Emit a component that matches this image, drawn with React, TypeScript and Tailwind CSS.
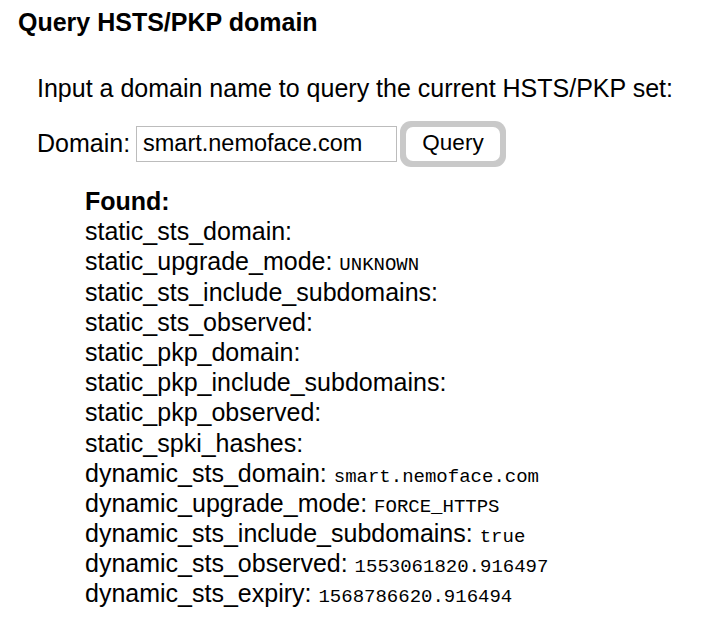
export default function App() {
  const rows: [string, string?][] = [
    ['static_sts_domain:'],
    ['static_upgrade_mode:', 'UNKNOWN'],
    ['static_sts_include_subdomains:'],
    ['static_sts_observed:'],
    ['static_pkp_domain:'],
    ['static_pkp_include_subdomains:'],
    ['static_pkp_observed:'],
    ['static_spki_hashes:'],
    ['dynamic_sts_domain:', 'smart.nemoface.com'],
    ['dynamic_upgrade_mode:', 'FORCE_HTTPS'],
    ['dynamic_sts_include_subdomains:', 'true'],
    ['dynamic_sts_observed:', '1553061820.916497'],
    ['dynamic_sts_expiry:', '1568786620.916494'],
  ];

  return (
    <div className="w-[702px] h-[634px] bg-white text-black font-['Liberation_Sans',Arial,sans-serif] text-[25px]">
      <h2 className="pt-[7px] pl-[18px] font-bold leading-[30px]">Query HSTS/PKP domain</h2>

      <div className="pl-[37px]">
        <p className="mt-[36px] leading-[30px]">
          Input a domain name to query the current HSTS/PKP set:
        </p>

        <div className="mt-[17px] flex items-center h-[47px]">
          <label className="w-[99px]">Domain:</label>
          <input
            defaultValue="smart.nemoface.com"
            className="w-[261px] h-[36px] border border-[#bcbcbc] px-[6px] text-[23.5px] outline-none"
          />
          <div className="ml-[3px] rounded-[11px] bg-[#c9c9c9] p-[6px]">
            <button className="block w-[94px] h-[34px] rounded-[7px] bg-white text-[22.5px] leading-none">
              Query
            </button>
          </div>
        </div>

        <div className="mt-[19px] pl-[48px] leading-[30.2px]">
          <div className="font-bold">Found:</div>
          {rows.map(([k, v]) => (
            <div key={k} className="h-[30.2px]">
              {k}
              {v && (
                <>
                  {' '}
                  <span className="leading-none font-['Liberation_Mono','Courier_New',monospace] text-[19px]">{v}</span>
                </>
              )}
            </div>
          ))}
        </div>
      </div>
    </div>
  );
}
